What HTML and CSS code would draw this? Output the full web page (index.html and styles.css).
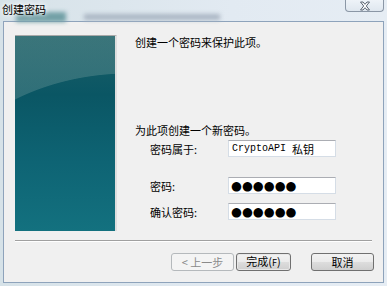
FILE: index.html
```html
<!DOCTYPE html>
<html lang="zh-CN">
  <head>
    <meta charset="UTF-8" />
    <meta name="viewport" content="width=device-width, initial-scale=1.0" />
    <title>创建密码</title>
    <link rel="stylesheet" href="styles.css">
  </head>
  <body>
    <div class="window">
      <!-- Title bar (glass) -->
      <div class="titlebar">
        <div class="glass glass-teal"></div>
        <div class="glass glass-gray"></div>
        <span class="title">创建密码</span>
        <div class="close">
          <svg width="12" height="10" viewBox="0 0 12 10">
            <path d="M1.5 1 H4 L6 3.3 L8 1 H10.5 L7.3 5 L10.5 9 H8 L6 6.7 L4 9 H1.5 L4.7 5 Z" fill="#fff" stroke="#5b6573" stroke-width="1" stroke-linejoin="round" />
          </svg>
        </div>
      </div>

      <!-- Dialog body -->
      <div class="client">
        <div class="main">
          <div class="banner"></div>
          <div class="content">
            <p class="intro">创建一个密码来保护此项。</p>
            <p class="prompt">为此项创建一个新密码。</p>
            <div class="form">
              <div class="row">
                <span class="label">密码属于:</span>
                <div class="field"><span class="mono">CryptoAPI </span>私钥</div>
              </div>
              <div class="row row-gap">
                <span class="label">密码:</span>
                <div class="field dots">●●●●●●</div>
              </div>
              <div class="row row-tight">
                <span class="label">确认密码:</span>
                <div class="field dots">●●●●●●</div>
              </div>
            </div>
          </div>
        </div>

        <div class="separator"></div>

        <div class="buttons">
          <button class="btn btn-back" disabled>&lt; 上一步</button>
          <button class="btn btn-finish">完成(<u>F</u>)</button>
          <button class="btn btn-cancel">取消</button>
        </div>
      </div>
    </div>
  </body>
</html>
```

FILE: styles.css
```css
body {
  margin: 0;
  background: #dbe5ee;
  font-family: "Noto Sans CJK SC", "Liberation Sans", sans-serif;
  font-size: 11px;
  color: #000;
}

.window {
  width: 387px;
  height: 286px;
  background: linear-gradient(to right, #d6e2e8, #e2eaf2 60%, #e6edf4);
  overflow: hidden;
}

/* title bar */

.titlebar {
  position: relative;
  height: 21px;
  display: flex;
  align-items: flex-start;
}

.glass {
  position: absolute;
  filter: blur(2px);
}

.glass-teal {
  left: 16px;
  top: 12px;
  width: 50px;
  height: 10px;
  background: #72a0a6;
}

.glass-gray {
  left: 84px;
  top: 14px;
  width: 136px;
  height: 6px;
  background: #aab6c3;
}

.title {
  position: relative;
  margin: 3px 0 0 2px;
  line-height: 13px;
  font-size: 11px;
  text-shadow: 0 0 4px #fff, 0 0 6px #fff;
}

.close {
  position: relative;
  margin-left: auto;
  margin-right: 3px;
  width: 39px;
  height: 12px;
  box-sizing: border-box;
  border: 1px solid #8b97a6;
  border-top: none;
  border-radius: 0 0 4px 4px;
  background: linear-gradient(#eef3f8, #dfe7ef);
  display: flex;
  justify-content: center;
  align-items: center;
}

/* client area */

.client {
  margin: 0 3px;
  width: 381px;
  height: 262px;
  box-sizing: border-box;
  border: 1px solid #8ea3bb;
  background: #f0f0f0;
}

.main {
  display: flex;
  padding: 13px 0 0 11px;
}

.banner {
  width: 102px;
  height: 196px;
  box-sizing: border-box;
  border-top: 1px solid #a9a9a9;
  border-right: 2px solid #dedede;
  background:
    radial-gradient(ellipse 200px 143px at 115px 180px, transparent 99.4%, rgba(120, 160, 160, 0.34) 100%),
    linear-gradient(#1b5f67 0, #0a5664 30%, #0e6474 65%, #13717f 100%);
}

.content {
  margin-left: 18px;
}

.intro,
.prompt {
  margin: 0;
  line-height: 14px;
}

.prompt {
  margin-top: 74px;
}

.form {
  margin-top: 3px;
}

.row {
  display: flex;
  align-items: center;
}

.row-gap {
  margin-top: 20px;
}

.row-tight {
  margin-top: 9px;
}

.label {
  width: 93px;
  padding-left: 15px;
  box-sizing: border-box;
}

.field {
  width: 108px;
  height: 17px;
  box-sizing: border-box;
  border: 1px solid #d5dde6;
  border-top-color: #abadb3;
  background: #fff;
  padding-left: 3px;
  display: flex;
  align-items: center;
  font-size: 11px;
  white-space: pre;
}

.mono {
  font-family: "Liberation Mono", monospace;
  font-size: 10px;
}

.dots {
  font-family: "DejaVu Sans", sans-serif;
  font-size: 12.5px;
  letter-spacing: 0;
  padding-left: 2px;
}

.separator {
  margin: 9px 0 0 11px;
  width: 357px;
  border-top: 1px solid #a0a0a0;
  border-bottom: 1px solid #fff;
}

/* buttons */

.buttons {
  display: flex;
  justify-content: flex-end;
  padding-right: 9px;
  margin-top: 11px;
}

.btn {
  height: 18px;
  padding: 0;
  box-sizing: border-box;
  border: 1px solid #707070;
  border-radius: 3px;
  background: linear-gradient(#f2f2f2 0, #ebebeb 50%, #dddddd 51%, #cfcfcf 100%);
  font-family: "Noto Sans CJK SC", "Liberation Sans", sans-serif;
  font-size: 11px;
  line-height: 14px;
  color: #000;
}

.btn-back {
  width: 63px;
  border-color: #b5b9bc;
  background: #f4f4f4;
  color: #8a8a8a;
}

.btn-finish {
  width: 55px;
  margin-left: 2px;
  box-shadow: inset 0 0 0 1px #e8e8e8;
}

.btn-finish u {
  text-decoration: none;
  font-size: 9px;
}

.btn-cancel {
  width: 63px;
  margin-left: 20px;
}
```
